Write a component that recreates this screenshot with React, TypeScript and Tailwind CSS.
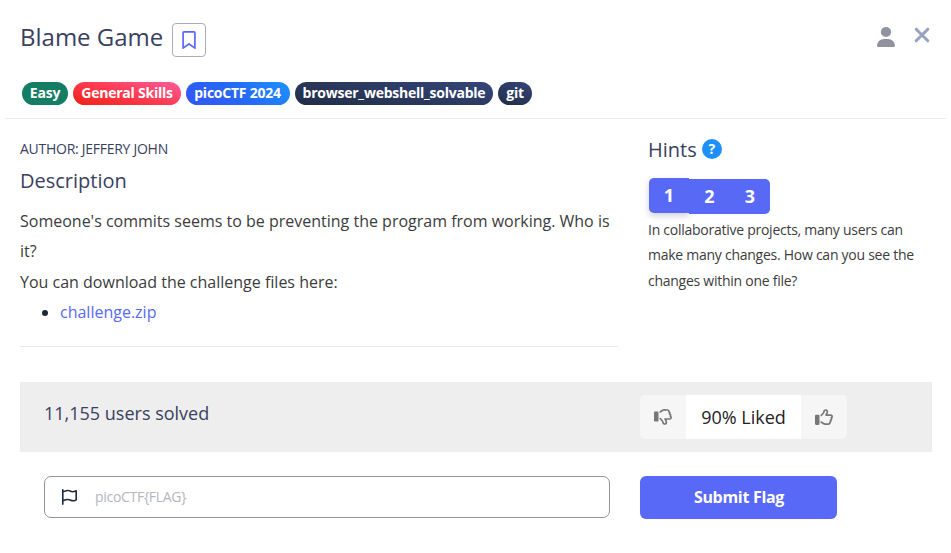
import {
  FaRegBookmark,
  FaRegFlag,
  FaRegThumbsDown,
  FaRegThumbsUp,
  FaUser,
} from "react-icons/fa6";

const tags = [
  { label: "Easy", style: "w-[46px] bg-[#147d64]" },
  { label: "General Skills", style: "w-[108px] bg-linear-[15deg,#f02010_0%,#ff3b52_50%,#ff5c9c_100%]" },
  { label: "picoCTF 2024", style: "w-[104px] pr-px bg-linear-[45deg,#3355f6_0%,#2668f6_50%,#1c92ff_100%]" },
  { label: "browser_webshell_solvable", style: "w-[198px] bg-linear-[10deg,#222d44,#34457a]" },
  { label: "git", style: "w-[34px] bg-linear-[20deg,#222d44,#34457a]" },
];

function Header() {
  return (
    <header className="mx-[5px] h-[119px] border-b border-[#eaeaef] pl-[15px] pr-4">
      <div className="flex h-[82px] items-start">
        <h1 className="mt-[19px] w-[152px] text-[24px] leading-9 text-[#3a4060]">Blame Game</h1>
        <button className="mt-[23px] flex size-[34px] items-center justify-center rounded border border-[#a9adb9] pr-px text-[#5869f8]">
          <FaRegBookmark className="h-[18px] w-[14px]" />
        </button>
        <div className="ml-auto flex">
          <FaUser className="mt-[26.5px] h-5 w-[18px] text-[#8f939f]" preserveAspectRatio="none" />
          <svg className="ml-[19px] mt-[26.5px] size-4" viewBox="0 0 16 16" fill="none" stroke="#98a1bd" strokeWidth="3" strokeLinecap="round">
            <path d="M2.2 2.2 13.8 13.8M13.8 2.2 2.2 13.8" />
          </svg>
        </div>
      </div>
      <div className="ml-[2px] flex gap-[5px]">
        {tags.map((t) => (
          <span
            key={t.label}
            className={`flex h-[23px] items-center justify-center rounded-full pb-px text-[14px] leading-5 font-bold tracking-[-0.24px] whitespace-nowrap text-white ${t.style}`}
          >
            {t.label}
          </span>
        ))}
      </div>
    </header>
  );
}

function Description() {
  return (
    <section className="h-[228px] w-[598px] border-b border-[#e8e8ea]">
      <div className="mt-[20px] text-[14px] leading-5 tracking-[-0.27px] text-[#3a4060]">AUTHOR: JEFFERY JOHN</div>
      <h2 className="mt-[7px] text-[20px] leading-[30px] text-[#3a4060]">Description</h2>
      <div className="mt-[9.8px] text-[16px] leading-[30.4px] text-[#3c3c3c]">
        <p>Someone's commits seems to be preventing the program from working. Who is it?</p>
        <p>You can download the challenge files here:</p>
        <ul className="list-disc pl-10 marker:text-[#1e2638]">
          <li>
            <a className="text-[#5869f8]">challenge.zip</a>
          </li>
        </ul>
      </div>
    </section>
  );
}

function Hints() {
  return (
    <section className="w-[284px]">
      <h2 className="mt-[16px] flex h-[30px] items-start gap-[5px] text-[20px] leading-[30px] text-[#3a4060]">
        Hints
        <span className="mt-1 size-5 rounded-full bg-[#1e90fc] text-center text-[14px] leading-[19px] font-bold text-white">?</span>
      </h2>
      <div className="ml-px mt-[13px] flex h-[38.6px] text-[18px] leading-[34px] font-bold text-white">
        <button className="h-[35px] w-10 rounded-l-[5px] bg-[#5869f6] pb-0.5 shadow-[0_3px_6px_rgba(50,50,93,0.22)]">1</button>
        <button className="mt-px h-[35px] w-[41px] bg-[#5869f6] pb-0.5">2</button>
        <button className="mt-px h-[35px] w-10 rounded-r-[5px] bg-[#5869f6] pb-0.5">3</button>
      </div>
      <p className="text-[14px] leading-[25.65px] tracking-[-0.26px] text-[#3c3c3c]">
        In collaborative projects, many users can make many changes. How can you see the changes within one file?
      </p>
    </section>
  );
}

function SolvedBar() {
  return (
    <section className="mx-5 mt-[35px] flex h-[69.5px] w-[912px] items-start bg-[#eee] pl-6">
      <div className="mt-[17px] w-[596px] text-[18px] leading-7 text-[#3a4060]">11,155 users solved</div>
      <div className="mt-[13px] flex h-11 overflow-hidden rounded-[5px] bg-[#f6f6f6] text-[#777]">
        <button className="flex w-[46px] items-center justify-center">
          <FaRegThumbsDown className="size-[18px]" />
        </button>
        <div className="w-[115px] bg-white text-center text-[18px] leading-[45px] text-[#222]">90% Liked</div>
        <button className="flex w-[46px] items-center justify-center">
          <FaRegThumbsUp className="size-[18px]" />
        </button>
      </div>
    </section>
  );
}

function FlagForm() {
  return (
    <form className="mt-[24.5px] flex gap-[30px] pl-11">
      <label className="flex h-[42px] w-[566px] items-center rounded-[7px] border border-[#9092a5]">
        <FaRegFlag className="mb-px ml-[17px] h-4 w-[15px] text-[#1e2b3c]" preserveAspectRatio="none" />
        <input
          className="mb-px ml-[18px] w-96 text-[14px] leading-5 tracking-[-0.3px] outline-none placeholder:text-[#b4b6c0]"
          placeholder="picoCTF{FLAG}"
        />
      </label>
      <button type="button" className="h-[42.5px] w-[197px] rounded-[6px] bg-[#5869f8] pl-px text-[16px] font-bold tracking-[-0.3px] text-white">
        Submit Flag
      </button>
    </form>
  );
}

export default function App() {
  return (
    <main className="h-[553px] w-[951px] overflow-hidden bg-white font-['Open_Sans','Noto_Sans',sans-serif] text-[#2a3150]">
      <Header />
      <div className="flex gap-[30px] pl-5">
        <Description />
        <Hints />
      </div>
      <SolvedBar />
      <FlagForm />
    </main>
  );
}
